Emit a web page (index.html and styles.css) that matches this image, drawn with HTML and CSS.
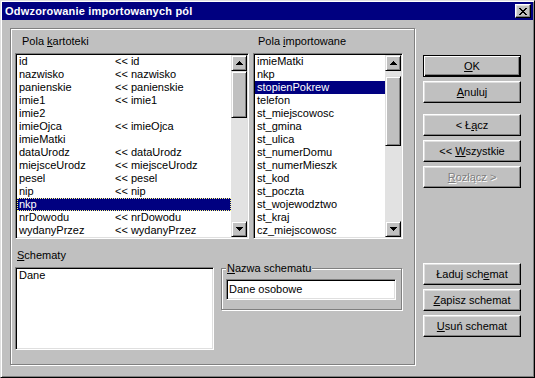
FILE: index.html
```html
<!DOCTYPE html>
<html>
<head>
<meta charset="utf-8">
<title>Odwzorowanie importowanych pól</title>
<link rel="stylesheet" href="styles.css">
</head>
<body>
<div class="window">
  <div class="titlebar">
    <span class="title">Odwzorowanie importowanych pól</span>
    <span class="close"><svg width="8" height="7" viewBox="0 0 8 7" shape-rendering="crispEdges"><path fill="#000" d="M0 0h2v1H0zM6 0h2v1H6zM1 1h2v1H1zM5 1h2v1H5zM2 2h4v1H2zM3 3h2v1H3zM2 4h4v1H2zM1 5h2v1H1zM5 5h2v1H5zM0 6h2v1H0zM6 6h2v1H6z"/></svg></span>
  </div>
  <div class="client">
    <div class="panel">
      <div class="lists">
        <div class="col col-left">
          <div class="label lbl-left">Pola <u>k</u>artoteki</div>
          <div class="listbox lb-main">
            <div class="rows">
              <div class="row pair"><span>id</span><span>&lt;&lt; id</span></div>
              <div class="row pair"><span>nazwisko</span><span>&lt;&lt; nazwisko</span></div>
              <div class="row pair"><span>panienskie</span><span>&lt;&lt; panienskie</span></div>
              <div class="row pair"><span>imie1</span><span>&lt;&lt; imie1</span></div>
              <div class="row pair"><span>imie2</span><span></span></div>
              <div class="row pair"><span>imieOjca</span><span>&lt;&lt; imieOjca</span></div>
              <div class="row pair"><span>imieMatki</span><span></span></div>
              <div class="row pair"><span>dataUrodz</span><span>&lt;&lt; dataUrodz</span></div>
              <div class="row pair"><span>miejsceUrodz</span><span>&lt;&lt; miejsceUrodz</span></div>
              <div class="row pair"><span>pesel</span><span>&lt;&lt; pesel</span></div>
              <div class="row pair"><span>nip</span><span>&lt;&lt; nip</span></div>
              <div class="row pair selected focused"><span>nkp</span><span></span></div>
              <div class="row pair"><span>nrDowodu</span><span>&lt;&lt; nrDowodu</span></div>
              <div class="row pair"><span>wydanyPrzez</span><span>&lt;&lt; wydanyPrzez</span></div>
            </div>
            <div class="scrollbar">
              <div class="sbtn"><svg width="7" height="4" viewBox="0 0 7 4" shape-rendering="crispEdges"><path fill="#000" d="M3 0h1v1h1v1h1v1h1v1H0V3h1V2h1V1h1z"/></svg></div>
              <div class="track"><div class="thumb thumb-left"></div></div>
              <div class="sbtn"><svg width="7" height="4" viewBox="0 0 7 4" shape-rendering="crispEdges"><path fill="#000" d="M0 0h7v1H6v1H5v1H4v1H3V3H2V2H1V1H0z"/></svg></div>
            </div>
          </div>
        </div>
        <div class="col col-right">
          <div class="label lbl-right">Pola <u>i</u>mportowane</div>
          <div class="listbox lb-main">
            <div class="rows">
              <div class="row">imieMatki</div>
              <div class="row">nkp</div>
              <div class="row selected">stopienPokrew</div>
              <div class="row">telefon</div>
              <div class="row">st_miejscowosc</div>
              <div class="row">st_gmina</div>
              <div class="row">st_ulica</div>
              <div class="row">st_numerDomu</div>
              <div class="row">st_numerMieszk</div>
              <div class="row">st_kod</div>
              <div class="row">st_poczta</div>
              <div class="row">st_wojewodztwo</div>
              <div class="row">st_kraj</div>
              <div class="row">cz_miejscowosc</div>
            </div>
            <div class="scrollbar">
              <div class="sbtn"><svg width="7" height="4" viewBox="0 0 7 4" shape-rendering="crispEdges"><path fill="#000" d="M3 0h1v1h1v1h1v1h1v1H0V3h1V2h1V1h1z"/></svg></div>
              <div class="track"><div class="thumb thumb-right"></div></div>
              <div class="sbtn"><svg width="7" height="4" viewBox="0 0 7 4" shape-rendering="crispEdges"><path fill="#000" d="M0 0h7v1H6v1H5v1H4v1H3V3H2V2H1V1H0z"/></svg></div>
            </div>
          </div>
        </div>
      </div>
      <div class="bottom">
        <div class="col-schem">
          <div class="label lbl-schem"><u>S</u>chematy</div>
          <div class="listbox lb-schem">
            <div class="rows">
              <div class="row">Dane</div>
            </div>
          </div>
        </div>
        <div class="group">
          <div class="legend"><u>N</u>azwa schematu</div>
          <div class="textbox">Dane osobowe</div>
        </div>
      </div>
    </div>
    <div class="buttons">
      <div class="btn default"><span><u>O</u>K</span></div>
      <div class="btn"><span><u>A</u>nuluj</span></div>
      <div class="btn sep"><span>&lt; Ł<u>ą</u>cz</span></div>
      <div class="btn"><span>&lt;&lt; <u>W</u>szystkie</span></div>
      <div class="btn disabled"><span><u>R</u>ozłącz &gt;</span></div>
      <div class="btn lower"><span>Ładuj sch<u>e</u>mat</span></div>
      <div class="btn"><span><u>Z</u>apisz schemat</span></div>
      <div class="btn"><span><u>U</u>suń schemat</span></div>
    </div>
  </div>
</div>
</body>
</html>
```
FILE: styles.css
```css
* {
  box-sizing: border-box;
}

html,
body {
  margin: 0;
  padding: 0;
}

body {
  width: 535px;
  height: 378px;
  overflow: hidden;
  background: #c0c0c0;
  color: #000;
  font-family: "Liberation Sans", Arial, sans-serif;
  font-size: 11px;
}

u {
  text-decoration: underline;
  text-underline-offset: 1px;
}

.window {
  width: 535px;
  height: 378px;
  display: flex;
  flex-direction: column;
  background: #c0c0c0;
  border: 1px solid;
  border-color: #dfdfdf #000 #000 #dfdfdf;
  box-shadow: inset 1px 1px #fff, inset -1px -1px #808080;
  padding: 1px;
}

/* title bar */
.titlebar {
  height: 18px;
  display: flex;
  align-items: center;
  background: #000080;
  color: #fff;
  font-weight: bold;
  padding: 0 2px 0 3px;
}

.title {
  letter-spacing: 0.2px;
}

.close {
  margin-left: auto;
  width: 16px;
  height: 14px;
  display: flex;
  align-items: center;
  justify-content: center;
  background: #c0c0c0;
  border: 1px solid;
  border-color: #fff #000 #000 #fff;
  box-shadow: inset -1px -1px #808080, inset 1px 1px #dfdfdf;
}

/* client area */
.client {
  flex: 1;
  display: flex;
  padding: 8px 0 0 8px;
}

.panel {
  width: 405px;
  height: 337px;
  border: 1px solid #808080;
  box-shadow: inset 1px 1px #fff, 1px 1px #fff;
  padding: 6px 0 0 4px;
}

.lists {
  display: flex;
  gap: 4px;
}

.col-left {
  width: 234px;
}

.col-right {
  width: 150px;
}

.label {
  height: 13px;
  line-height: 13px;
  margin-bottom: 5px;
  white-space: nowrap;
}

.lbl-left {
  padding-left: 7px;
}

.lbl-right {
  padding-left: 5px;
}

.lbl-schem {
  padding-left: 2px;
}

/* list boxes */
.listbox {
  display: flex;
  background: #fff;
  border: 1px solid;
  border-color: #808080 #fff #fff #808080;
  box-shadow: inset 1px 1px #000, inset -1px -1px #dfdfdf;
  padding: 1px;
}

.lb-main {
  height: 186px;
}

.rows {
  flex: 1;
  overflow: hidden;
}

.row {
  height: 13px;
  line-height: 13px;
  padding-left: 2px;
  white-space: nowrap;
}

.pair {
  display: grid;
  grid-template-columns: 96px auto;
}

.selected {
  background: #000080;
  color: #fff;
}

.focused {
  outline: 1px dotted #ffff80;
  outline-offset: -1px;
}

/* scrollbar */
.scrollbar {
  width: 16px;
  display: flex;
  flex-direction: column;
}

.sbtn,
.thumb {
  background: #c0c0c0;
  border: 1px solid;
  border-color: #dfdfdf #000 #000 #dfdfdf;
  box-shadow: inset 1px 1px #fff, inset -1px -1px #808080;
}

.sbtn {
  height: 16px;
  display: flex;
  align-items: center;
  justify-content: center;
}

.track {
  flex: 1;
  display: flex;
  flex-direction: column;
  background: #e2e2e2;
}

.thumb-left {
  height: 47px;
}

.thumb-right {
  margin-top: 5px;
  height: 70px;
}

/* bottom section */
.bottom {
  display: flex;
  gap: 7px;
  margin-top: 10px;
}

.col-schem {
  width: 199px;
}

.lb-schem {
  height: 83px;
}

.group {
  width: 181px;
  height: 42px;
  margin-top: 19px;
  border: 1px solid #808080;
  box-shadow: inset 1px 1px #fff, 1px 1px #fff;
  padding: 0 5px 0 4px;
}

.legend {
  width: fit-content;
  height: 13px;
  line-height: 13px;
  margin-top: -7px;
  padding: 0 1px;
  background: #c0c0c0;
  white-space: nowrap;
}

.textbox {
  margin-top: 4px;
  height: 21px;
  line-height: 17px;
  background: #fff;
  border: 1px solid;
  border-color: #808080 #fff #fff #808080;
  box-shadow: inset 1px 1px #000, inset -1px -1px #dfdfdf;
  padding: 1px 2px;
}

/* buttons */
.buttons {
  width: 98px;
  margin-left: 8px;
  padding-top: 27px;
  display: flex;
  flex-direction: column;
}

.btn {
  height: 22px;
  margin-bottom: 4px;
  display: flex;
  align-items: center;
  justify-content: center;
  background: #c0c0c0;
  border: 1px solid;
  border-color: #fff #000 #000 #fff;
  box-shadow: inset -1px -1px #808080, inset 1px 1px #dfdfdf;
  white-space: nowrap;
}

.btn.default {
  border-color: #000;
  box-shadow: inset 1px 1px #fff, inset -1px -1px #000, inset -2px -2px #808080;
}

.btn.sep {
  margin-top: 7px;
}

.btn.lower {
  margin-top: 71px;
}

.btn.disabled {
  color: #808080;
  text-shadow: 1px 1px #fff;
}
```
